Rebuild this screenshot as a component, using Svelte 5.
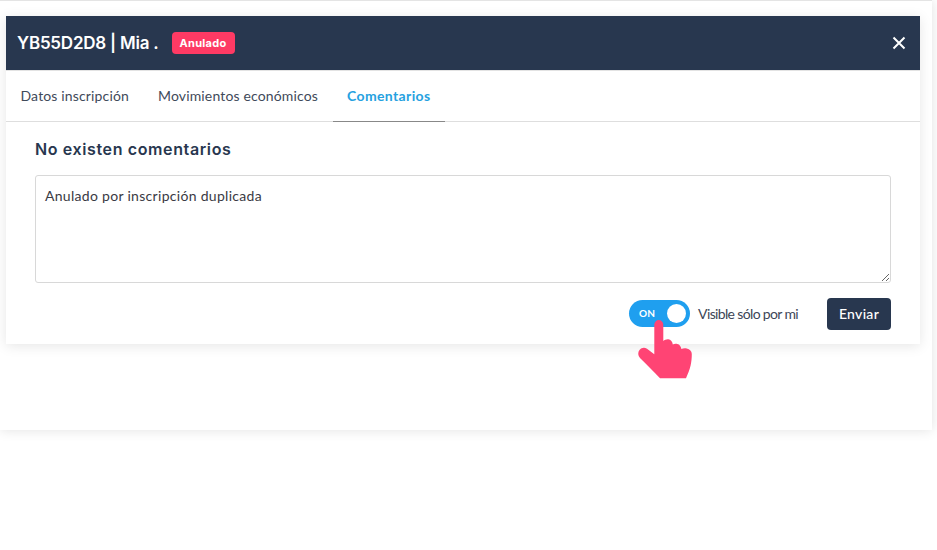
<script lang="ts">
  const tabs = ['Datos inscripción', 'Movimientos económicos', 'Comentarios'];
  let active = 2;
  let visible = $state(true);
  let comment = $state('Anulado por inscripción duplicada');
</script>

<div class="screen">
  <div class="page">
    <section class="modal">
      <header class="head">
        <h1>YB55D2D8 | Mia .</h1>
        <span class="badge">Anulado</span>
        <button class="close" aria-label="Cerrar">
          <svg width="14" height="14" viewBox="0 0 14 14" aria-hidden="true">
            <path d="M1.5 1.5l11 11M12.5 1.500l-11 11" stroke="#fff" stroke-width="2" fill="none" />
          </svg>
        </button>
      </header>

      <nav class="tabs">
        {#each tabs as tab, i}
          <span class="tab" class:active={i === active}>{tab}</span>
        {/each}
      </nav>

      <div class="body">
        <h2>No existen comentarios</h2>
        <textarea bind:value={comment}></textarea>
        <div class="actions">
          <button class="toggle" class:on={visible} onclick={() => (visible = !visible)}>
            <span class="on-text">ON</span>
            <span class="knob"></span>
          </button>
          <span class="hint">Visible sólo por mi</span>
          <button class="send">Enviar</button>
        </div>
      </div>
    </section>

    <!-- pointer drawn over the toggle -->
    <svg class="hand" width="58" height="62" viewBox="636 318 58 62" aria-hidden="true">
      <path
        fill="#ff4474"
        d="M654.3 324.600A4.500 4.500 0 0 1 663.300 324.600V341C664.500 339.800 666.500 339 668.300 339.200C670.800 339.500 672.500 341.500 672.800 344.500C674 343.800 675.800 343.600 677.300 344C679.500 344.500 681 346.300 681.400 349C682.800 348.200 684.800 348 686.700 348.400C689.800 349 691.800 351 691.800 354C691.800 358 691.400 362 690.600 365.500C689.600 370 687.800 374 686 378.300H660C654 372 646 364 640 358C637.800 355.800 637.700 352 639.500 350C641.500 347.600 644.500 347 647 348.800L654.300 354.300Z"
      />
    </svg>
  </div>
</div>

<style>
  :global(body) {
    margin: 0;
    background: #fff;
    font-family: Lato, sans-serif;
  }
  .screen {
    height: 550px;
    overflow: hidden;
  }
  .page {
    position: relative;
    box-sizing: border-box;
    width: 932px;
    height: 430px;
    padding: 16px 12px 0 6px;
    border-top: 1px solid #e4e4e4;
    background: #fff;
    box-shadow: 0 0 12px rgba(0, 0, 0, 0.12);
  }
  .modal {
    background: #fff;
    box-shadow: 0 2px 12px rgba(0, 0, 0, 0.1);
    height: 328px;
    margin-top: -1px;
  }
  .head {
    display: flex;
    align-items: center;
    height: 54px;
    padding: 0 14px 0 11px;
    background: #28374f;
    color: #fff;
  }
  h1 {
    margin: 0;
    font: 600 17px Inter, sans-serif;
    letter-spacing: -0.22px;
  }
  .badge {
    margin-left: 13px;
    padding: 0 8px;
    border-radius: 4px;
    background: #fe3a64;
    font: 700 11px/22px Inter, sans-serif;
    letter-spacing: 0.3px;
  }
  .close {
    display: flex;
    margin-left: auto;
    padding: 0;
    border: 0;
    background: none;
  }
  .tabs {
    display: flex;
    height: 50px;
    border-top: 1px solid #e3e3e3;
    border-bottom: 1px solid #dedede;
  }
  .tab {
    padding: 0 14.500px;
    line-height: 50px;
    font-size: 14px;
    color: #3f4a5a;
    letter-spacing: 0.15px;
  }
  .tab.active {
    margin-bottom: -1px;
    border-bottom: 1px solid #888;
    color: #26a1e0;
    font-weight: 700;
    letter-spacing: 0.37px;
  }
  .body {
    padding: 17px 29px 0;
  }
  h2 {
    margin: 0 0 16px;
    font: 600 16px/20px Inter, sans-serif;
    letter-spacing: 0.62px;
    color: #28374f;
  }
  textarea {
    display: block;
    box-sizing: border-box;
    width: 100%;
    height: 108px;
    padding: 12px 9px;
    border: 1px solid #d8d8d8;
    border-radius: 3px;
    outline: 0;
    font: 14px/16px Lato, sans-serif;
    letter-spacing: 0.3px;
    color: #3a3a44;
  }
  .actions {
    display: flex;
    align-items: center;
    justify-content: flex-end;
    margin-top: 15px;
    height: 32px;
  }
  .toggle {
    position: relative;
    width: 61px;
    height: 27px;
    margin-top: -2px;
    padding: 0;
    border: 0;
    border-radius: 14px;
    background: #1f9fef;
    color: #fff;
  }
  .on-text {
    position: absolute;
    left: 10px;
    top: 7px;
    font: 700 10px/13px Lato, sans-serif;
  }
  .knob {
    position: absolute;
    right: 4px;
    top: 4px;
    width: 19px;
    height: 19px;
    border-radius: 50%;
    background: #fff;
  }
  .hint {
    margin: -1px 29px 0 8px;
    font-size: 14px;
    letter-spacing: -0.65px;
    color: #3d4657;
  }
  .send {
    width: 64px;
    height: 32px;
    padding: 0 0 2px;
    border: 0;
    border-radius: 4px;
    background: #28374f;
    color: #fff;
    font: 500 14px Lato, sans-serif;
    letter-spacing: 0.3px;
  }
  .hand {
    position: absolute;
    left: 636px;
    top: 317px;
  }
</style>
